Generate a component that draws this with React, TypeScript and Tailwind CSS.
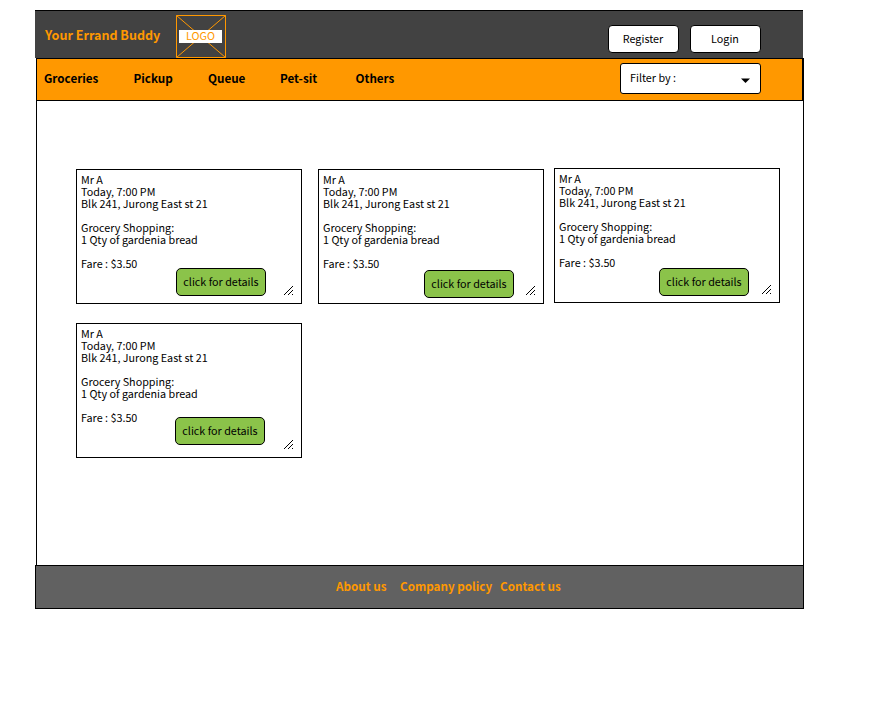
type Job = { card: string; button: string };

const jobs: Job[] = [
  { card: "mt-px", button: "ml-[95px] mt-[10px]" },
  { card: "mt-px ml-4", button: "ml-[101px] mt-3" },
  { card: "ml-[10px]", button: "ml-[100px] mt-[11px]" },
];

const lastJob: Job = { card: "mt-[19px]", button: "ml-[94px] mt-[5px]" };

const navLinks = [
  { label: "Groceries", width: "w-[89.5px]" },
  { label: "Pickup", width: "w-[74.5px]" },
  { label: "Queue", width: "w-[72px]" },
  { label: "Pet-sit", width: "w-[75.5px]" },
  { label: "Others", width: "w-[60px]" },
];

// Pixel coordinates of the three diagonal strokes of the grip.
const gripDots = [
  [0, 8], [1, 7], [2, 6], [3, 5], [4, 4], [5, 3], [6, 2], [7, 1], [8, 0],
  [4, 8], [5, 7], [6, 6], [7, 5], [8, 4],
  [8, 8],
];

function ResizeGrip() {
  return (
    <svg className="absolute top-[116px] left-[207px]" width="9" height="9" viewBox="0 0 9 9" shapeRendering="crispEdges">
      {gripDots.map(([x, y]) => (
        <rect key={`${x}-${y}`} x={x} y={y} width="1" height="1" fill="#000" />
      ))}
    </svg>
  );
}

function JobCard({ card, button }: Job) {
  return (
    <article className={`relative h-[135px] w-[226px] shrink-0 border border-black bg-white p-1 ${card}`}>
      <p>Mr A</p>
      <p>Today, 7:00 PM</p>
      <p>Blk 241, Jurong East st 21</p>
      <p className="mt-3">Grocery Shopping:</p>
      <p>1 Qty of gardenia bread</p>
      <div className="mt-3 flex items-start">
        <p className="w-0">Fare : $3.50</p>
        <button className={`h-7 w-[90px] shrink-0 rounded-[5px] border border-black bg-[#8bc34a] text-center ${button}`}>
          click for details
        </button>
      </div>
      <ResizeGrip />
    </article>
  );
}

function Logo() {
  return (
    <div className="ml-[15.5px] mt-1 grid h-[43px] w-[50px] shrink-0 place-items-center">
      <svg className="col-start-1 row-start-1" width="50" height="43" viewBox="0 0 50 43" fill="none" stroke="#ff9800">
        <path d="M.5 .5H49.5V42.5H.5Z M.5 .5L49.5 42.5 M49.5 .5L.5 42.5" />
      </svg>
      <span className="col-start-1 row-start-1 mr-px h-[13px] w-[43px] bg-white text-center leading-[12px] text-[#ff9800]">LOGO</span>
    </div>
  );
}

export default function App() {
  return (
    <div className="h-[718px] w-[878px] overflow-hidden whitespace-nowrap bg-white pl-[35px] pt-[10px] font-['Noto_Sans_CJK_SC',sans-serif] text-[10.77px] leading-3 text-black">
      <header className="flex h-12 w-[768px] border-t border-black bg-[#424242] pl-[10px]">
        <h1 className="mt-[18px] w-[115.5px] text-[12.56px] font-bold text-[#ff9800]">Your Errand Buddy</h1>
        <Logo />
        <button className="ml-[382px] mt-[14px] h-7 w-[71px] rounded border border-black bg-white pr-px">Register</button>
        <button className="ml-[11px] mt-[14px] h-7 w-[71px] rounded border border-black bg-white pr-px">Login</button>
      </header>

      <div className="ml-px h-[507px] w-[768px] border-x border-black">
        <nav className="-ml-px flex h-[43px] w-[767px] border border-black bg-[#ff9800] pl-[7px]">
          {navLinks.map((link) => (
            <a key={link.label} className={`mt-[13px] shrink-0 text-[11.66px] font-bold ${link.width}`}>
              {link.label}
            </a>
          ))}
          <div className="ml-[204px] mt-1 flex h-[31px] w-[141px] shrink-0 items-center justify-between rounded-[3px] border border-black bg-white pl-[9.5px] pr-[10px]">
            <span className="-mt-0.5">Filter by :</span>
            <svg className="mt-1" width="9" height="5" viewBox="0 0 9 5">
              <path d="M0 .5H9L4.5 5Z" fill="#000" />
            </svg>
          </div>
        </nav>
        <main className="pl-[39px] pt-[67px]">
          <section className="flex items-start">
            {jobs.map((job) => (
              <JobCard key={job.button} {...job} />
            ))}
          </section>
          <JobCard {...lastJob} />
        </main>
      </div>

      <footer className="flex h-11 w-[769px] border border-black bg-[#616161] pl-[300px] text-[11.66px] font-bold text-[#ff9800]">
        <a className="mt-[14px] w-[64px]">About us</a>
        <a className="mt-[14px] w-[100px]">Company policy</a>
        <a className="mt-[14px]">Contact us</a>
      </footer>
    </div>
  );
}
